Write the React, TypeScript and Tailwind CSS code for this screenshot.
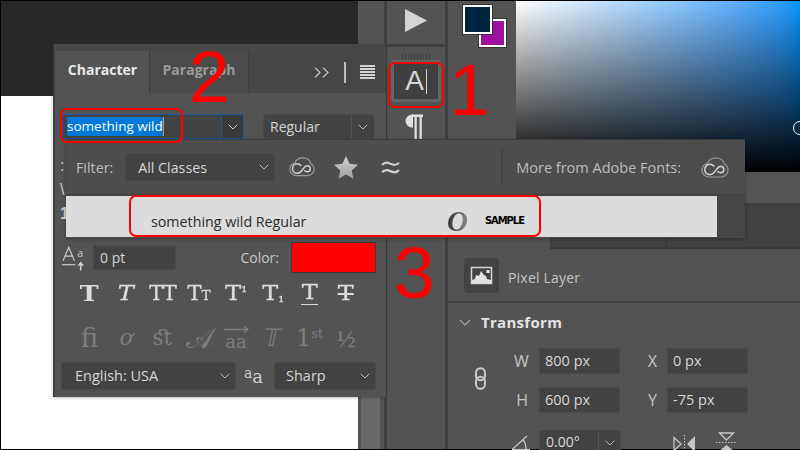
import React from "react";

const Chevron = ({ color = "#b8b8b8", size = 10 }: { color?: string; size?: number }) => (
  <svg width={size} height={size * 0.6} viewBox="0 0 10 6" fill="none" stroke={color} strokeWidth="1">
    <path d="M.7.7 5 5 9.3.7" />
  </svg>
);

const CloudLoop = ({ width = 28 }: { width?: number }) => (
  <svg width={width} height={width * 0.75} viewBox="0 0 28 21" fill="none">
    <path d="M8 20C3.800 20 1 16.800 1 13.200 1 10 3 7.400 6.200 6.600 7.600 3 11 1 15 1c4.400 0 7.600 2.600 8.600 6.200C25.800 8.400 27 10.600 27 13.200 27 16.800 24 20 20 20Z" stroke="#9c9c9c" strokeWidth="1.200" />
    <path d="M13.400 9.400C12 8 10.400 7.200 8.800 7.200c-3 0-5 2.600-5 5.400 0 2.800 2.200 5 5 5 2.600 0 4.400-2 6-4.200 1.600-2.400 3-4 5-4 1.600 0 3 1.200 3 3.200 0 1.800-1.400 3.200-3 3.200-1.200 0-2.400-.6-3.400-1.600" stroke="#cfcfcf" strokeWidth="1.600" />
  </svg>
);

const Star = () => (
  <svg width="26" height="25" viewBox="0 0 26 25">
    <defs>
      <linearGradient id="starFill" x1="0" y1="0" x2="0" y2="1">
        <stop offset="0" stopColor="#d0d0d0" />
        <stop offset="1" stopColor="#a0a0a0" />
      </linearGradient>
    </defs>
    <path d="M13 1l3.600 7.800 8.400.9-6.300 5.700 1.800 8.400L13 19.400 5.500 23.800l1.800-8.400L1 9.700l8.400-.9z" fill="url(#starFill)" />
  </svg>
);

const Waves = () => (
  <svg width="19" height="15" viewBox="0 0 19 15" fill="none" stroke="#d0d0d0" strokeWidth="2.200">
    <path d="M1 5c2.500-3 5-3 8-1.400S15.500 5.500 18 2.600" />
    <path d="M1 12.400c2.500-3 5-3 8-1.400s6.500 1.900 9-1" />
  </svg>
);

const DropSelect = ({ label, className, pad }: { label: string; className: string; pad: string }) => (
  <div className={`flex items-center justify-between rounded-[3px] border border-[#4a4a4a] bg-[#424242] text-[#d6d6d6] ${className}`}>
    <span className={pad}>{label}</span>
    <span className="pr-[5px]"><Chevron /></span>
  </div>
);

const Field = ({ value }: { value: string }) => (
  <div className="flex h-[26px] w-[81px] items-center border border-[#4a4a4a] bg-[#424242] pl-[5px] text-[14.500px] text-[#d8d8d8]">
    {value}
  </div>
);

// Character panel: type-style buttons, live and greyed rows
const serif = "font-['DejaVu_Serif'] leading-none";
const wide = "inline-block scale-x-[1.2] [-webkit-text-stroke:0.3px_#dcdcdc]";
const styleRow = [
  <span className={`${serif} text-[22px] font-bold scale-x-[1.15] inline-block`}>T</span>,
  <span className={`${serif} ${wide} text-[20px] italic`}>T</span>,
  <span className={`${serif} inline-block scale-x-[1.05] [-webkit-text-stroke:0.3px_#dcdcdc] text-[20px] tracking-[-1px]`}>TT</span>,
  <span className={`${serif} inline-block scale-x-[1.05] [-webkit-text-stroke:0.3px_#dcdcdc] text-[20px]`}>T<span className="text-[13px]">T</span></span>,
  <span className={`${serif} ${wide} text-[20px]`}>T<span className="relative -top-[8px] text-[8px]">1</span></span>,
  <span className={`${serif} ${wide} text-[20px]`}>T<span className="relative top-[2px] text-[8px]">1</span></span>,
  <span className={`${serif} border-b border-[#d8d8d8] px-[2px] pb-[2px]`}><span className={`${wide} text-[20px]`}>T</span></span>,
  <span className={`${serif} ${wide} text-[20px] line-through`}>T</span>,
];
const featureRow = [
  <span className={`${serif} text-[26px]`}>fi</span>,
  <span className={`${serif} text-[22px] italic`}>ơ</span>,
  <span className={`${serif} text-[22px]`}>ﬆ</span>,
  <span className="font-['DejaVu_Sans'] text-[29px] leading-none">𝒜</span>,
  <span className="flex flex-col items-center leading-none">
    <svg width="25" height="7" viewBox="0 0 25 7" fill="none" stroke="#7e7e7e" strokeWidth="1.300"><path d="M0 3.500h24M20 .5l4 3-4 3" /></svg>
    <span className={`${serif} text-[18px]`}>aa</span>
  </span>,
  <span className="inline-block -skew-x-12 font-['DejaVu_Sans'] text-[24px] leading-none">𝕋</span>,
  <span className={`${serif} text-[24px]`}>1<span className="relative -top-[8px] text-[13px]">st</span></span>,
  <span className="font-['Liberation_Serif'] text-[25px] leading-none">½</span>,
];

function CharacterPanel() {
  return (
    <div className="absolute left-[53px] top-[44px] flex h-[353px] w-[333px] flex-col border-l-2 border-[#3e3e3e] bg-[#535353] pl-px shadow-[0_1px_3px_rgba(0,0,0,0.25)]">
      <div className="h-[7px] shrink-0 bg-[#474747]" />
      <div className="flex h-[42px] shrink-0 bg-[#464646] text-[14px] font-bold">
        <div className="flex w-[93px] items-center justify-center bg-[#535353] pb-[5px] text-[#e8e8e8]">Character</div>
        <div className="flex w-[100px] items-center justify-center border-x border-[#3c3c3c] bg-[#4b4b4b] pb-[5px] text-[#999999]">Paragraph</div>
        <div className="flex flex-1 items-center justify-end gap-[14px] pr-[11px]">
          <svg width="16" height="11" viewBox="0 0 16 11" fill="none" stroke="#d0d0d0" strokeWidth="1.100"><path d="M1 .7 6 5.500 1 10.300M9 .7l5 4.800-5 4.800" /></svg>
          <div className="h-[21px] w-[2px] bg-[#bdbdbd]" />
          <div className="flex w-[15px] flex-col gap-[1.500px]">
            {[0, 1, 2, 3, 4].map((i) => (<div key={i} className="h-[1.500px] bg-[#d4d4d4]" />))}
          </div>
        </div>
      </div>
      <div className="flex h-[46px] shrink-0 items-end gap-[19px] pl-[6px]">
        <div className="flex h-[25px] w-[182px] border border-[#1c5a9c] bg-[#424242]">
          <div className="flex-1 pl-[4px] pt-[2px]">
            <span className="block h-[19px] w-[97px] whitespace-nowrap border-r border-[#e08a3c] bg-[#0078d7] text-[13.500px] leading-[19px] text-white">something wild</span>
          </div>
          <div className="flex w-[22px] items-center justify-center border-l border-[#1c5a9c] bg-[#3a3a3a]"><Chevron color="#cfcfcf" /></div>
        </div>
        <div className="flex h-[25px] w-[112px] rounded-[4px] border border-[#4b4b4b] bg-[#424242] text-[14px] text-[#d6d6d6]">
          <div className="flex-1 pl-[6px] leading-[23px]">Regular</div>
          <div className="flex w-[23px] items-center justify-center border-l border-[#545454]"><Chevron /></div>
        </div>
      </div>
      {/* Rows covered by the open font list; only their left edge shows */}
      <div className="flex h-[101px] shrink-0 flex-col gap-[4px] pl-[4px] pt-[17px] font-['Liberation_Sans'] text-[16px] leading-[20px] text-[#d0d0d0]">
        <span>:</span>
        <span>\</span>
        <span className="font-bold">1</span>
      </div>
      <div className="flex h-[34px] shrink-0 items-center pl-[6px] pr-[10px] pt-px text-[14px] text-[#d6d6d6]">
        <svg width="24" height="26" viewBox="0 0 25 26" fill="none" stroke="#cfcfcf">
          <path d="M1 16 7 2l6 14M3.500 11h7" strokeWidth="1.200" />
          <path d="M0 20h14" strokeWidth="1.200" />
          <path d="M19.500 26v-7M17 21l2.500-3 2.500 3" strokeWidth="1.600" />
          <text x="16" y="12" fontSize="11" fill="#cfcfcf" stroke="none" fontFamily="Open Sans">a</text>
        </svg>
        <div className="ml-[7px] flex h-[25px] w-[83px] items-center border border-[#4a4a4a] bg-[#424242] pl-[6px]">0 pt</div>
        <div className="ml-auto flex items-center gap-[12px]">
          <span className="text-[#c8c8c8]">Color:</span>
          <div className="h-[31px] w-[85px] border border-[#3c3c3c] bg-[#ff0000]" />
        </div>
      </div>
      <div className="flex h-[38px] shrink-0 items-center pl-[15px] text-[#dcdcdc]">
        {styleRow.map((g, i) => (
          <div key={i} className="flex w-[36.700px] justify-center">{g}</div>
        ))}
      </div>
      <div className="flex h-[46px] shrink-0 items-center pl-[15px] pt-[6px] text-[#7e7e7e]">
        {featureRow.map((g, i) => (
          <div key={i} className="flex w-[36.700px] justify-center">{g}</div>
        ))}
      </div>
      <div className="flex items-center pl-[5px] pt-[4px] text-[14.500px]">
        <DropSelect label="English: USA" className="h-[28px] w-[175px]" pad="pl-[13px]" />
        <span className="ml-[8px] flex w-[22px] items-baseline font-['DejaVu_Serif'] text-[#cfcfcf]">
          <span className="relative -top-[5px] text-[14px]">a</span><span className="text-[18px]">a</span>
        </span>
        <DropSelect label="Sharp" className="ml-[8px] h-[28px] w-[102px]" pad="pl-[11px]" />
      </div>
    </div>
  );
}

function FontPopup() {
  return (
    <div className="absolute left-[66px] top-[139px] flex h-[99px] w-[679px] flex-col border-t border-[#3b3b3b] bg-[#4d4d4d] text-[14.250px] shadow-[0_1px_4px_rgba(0,0,0,0.3)]">
      <div className="flex h-[56px] shrink-0 items-center border-b-2 border-[#434343] pl-[10px]">
        <span className="pt-px text-[#bdbdbd]">Filter:</span>
        <div className="ml-[12px] flex h-[28px] w-[150px] items-center justify-between rounded-[3px] border border-[#474747] bg-[#424242] pl-[12px] pr-[5px] text-[#d6d6d6]">
          <span className="pt-px">All Classes</span><Chevron />
        </div>
        <span className="ml-[14px]"><CloudLoop width={26} /></span>
        <span className="ml-[18px]"><Star /></span>
        <span className="ml-[22px]"><Waves /></span>
        <div className="ml-[101px] h-[36px] w-[2px] bg-[#434343]" />
        <span className="ml-[13px] pt-px text-[#bdbdbd] text-[14.500px]">More from Adobe Fonts:</span>
        <span className="ml-[20px]"><CloudLoop /></span>
      </div>
      <div className="mb-px flex flex-1 bg-[#464646]">
        <div className="flex w-[651px] items-center bg-[#dcdcdc] pl-[85px] pt-[10px] text-[#2a2a2a]">
          <span className="w-[296px] whitespace-nowrap">something wild Regular</span>
          <span className="bg-linear-to-r from-[#333333] to-[#999999] bg-clip-text pr-[3px] font-['Liberation_Serif'] text-[29px] font-bold italic leading-none text-transparent">O</span>
          <span className="ml-[14px] font-['DejaVu_Sans_Condensed','DejaVu_Sans'] text-[11px] font-bold tracking-[-1px] text-black">SAMPLE</span>
        </div>
      </div>
    </div>
  );
}

function ToolDock() {
  return (
    <div className="flex w-[58px] shrink-0 flex-col items-center bg-[#535353]">
      <div className="flex h-[46px] w-full items-center justify-center border-b-[3px] border-[#3f3f3f] pb-[4px]">
        <svg width="22" height="23" viewBox="0 0 22 23"><path d="M0 0 22 11.500 0 23Z" fill="#d4d4d4" /></svg>
      </div>
      <div className="mt-[7px] flex gap-[2px]">
        {Array.from({ length: 10 }).map((_, i) => (<div key={i} className="h-[5px] w-px bg-[#3e3e3e]" />))}
      </div>
      <div className="mt-[1px] flex h-[42px] w-[50px] items-center justify-center rounded-[4px] border-[3px] border-[#636363] bg-[#3f3f3f] text-[28px] text-[#d8d8d8]">
        <span className="font-['Liberation_Sans'] leading-none">A</span>
        <span className="ml-[2px] h-[25px] w-px bg-[#d8d8d8]" />
      </div>
      <svg className="-ml-[6px] mt-[12px]" width="19" height="26" viewBox="0 0 19 26">
        <path d="M1.500 7A6.500 6.500 0 0 1 8 .5h1V13.500H8A6.500 6.500 0 0 1 1.500 7Z" fill="#e0e0e0" />
        <path d="M8 .5H19v2.500H8z" fill="#e0e0e0" />
        <path d="M10.500 2h2.300v24h-2.300zM15.500 2h2.300v24h-2.300z" fill="#e0e0e0" />
      </svg>
    </div>
  );
}

function PropertiesColumn() {
  return (
    <div className="flex min-w-0 flex-1 flex-col bg-[#535353] text-[14px] text-[#c4c4c4]">
      <div className="flex h-[171px] shrink-0">
        {/* Foreground and background chips */}
        <div className="relative w-[68px] shrink-0">
          <div className="absolute left-[31px] top-[18px] h-[28px] w-[27px] border-2 border-white bg-[#a010a0] outline outline-1 outline-[#333333]" />
          <div className="absolute left-[15px] top-[4px] h-[29px] w-[29px] border-2 border-white bg-[#00253f] outline outline-1 outline-[#333333]" />
        </div>
        <div className="relative flex-1 bg-linear-to-r from-white to-[#0096ff]">
          <div className="absolute inset-0 bg-linear-to-b from-transparent to-black" />
          <div className="absolute left-[277px] top-[120px] h-[14px] w-[14px] rounded-full border border-white" />
        </div>
      </div>
      <div className="flex h-[31px] shrink-0 justify-end bg-[#4d4d4d]">
        <div className="w-[55px] bg-[#555555]" />
      </div>
      <div className="h-[4px] shrink-0 bg-[#3f3f3f]" />
      <div className="flex h-[42px] shrink-0 bg-[#424242]">
        <div className="w-[102px] bg-[#535353]" />
        <div className="w-[117px] border-x border-[#3a3a3a] border-b-2" />
        <div className="flex-1 border-b-2 border-[#3a3a3a]" />
      </div>
      <div className="flex h-[52px] shrink-0 items-center gap-[9px] pl-[16px]">
        <div className="flex h-[35px] w-[35px] items-center justify-center rounded-[4px] bg-[#434343]">
          <svg width="23" height="19" viewBox="0 0 23 19">
            <path d="M1.500 1.500h20v16h-20z" fill="none" stroke="#d8d8d8" strokeWidth="1.500" />
            <path d="M2 17v-3l3-1 1-4 3 1 2-5 3 4 2 1 1 3 4 1v3z" fill="#e2e2e2" />
            <rect x="16.500" y="4" width="3" height="3" fill="#e8e8e8" />
          </svg>
        </div>
        <span className="pt-[4px] tracking-[0.2px]">Pixel Layer</span>
      </div>
      <div className="h-[2px] shrink-0 bg-[#434343]" />
      <div className="flex h-[36px] shrink-0 items-center gap-[10px] pl-[11px] pt-[3px]">
        <Chevron size={12} color="#a8a8a8" />
        <span className="text-[15px] font-bold tracking-[0.3px] text-[#e4e4e4]">Transform</span>
      </div>
      <div className="flex pl-[24px] pt-[9px]">
        <div className="flex w-[17px] flex-col items-center pt-[19px]">
          <svg width="13" height="23" viewBox="0 0 13 23" fill="none" stroke="#cccccc" strokeWidth="2">
            <rect x="2" y="1.200" width="9" height="12" rx="4.500" />
            <rect x="2" y="9.800" width="9" height="12" rx="4.500" />
          </svg>
        </div>
        <div className="ml-[25px] grid grid-cols-[25px_81px_47px_81px] grid-rows-[26px_26px] items-center gap-y-[13px]">
          <span className="text-left text-[16px]">W</span><Field value="800 px" />
          <span className="pr-[10px] text-right text-[16px]">X</span><Field value="0 px" />
          <span className="pr-[11px] text-right text-[16px]">H</span><Field value="600 px" />
          <span className="pr-[10px] text-right text-[16px]">Y</span><Field value="-75 px" />
        </div>
      </div>
      <div className="flex items-start pl-[64px] pt-[17px]">
        <svg className="mt-[5px]" width="18" height="16" viewBox="0 0 18 16" fill="none" stroke="#cccccc" strokeWidth="1.200">
          <path d="M0 14.500 15 1M0 14.500h18M11 5c2 2 3 5 3 9" />
        </svg>
        <div className="ml-[9px] flex h-[26px] w-[82px] rounded-[3px] border border-[#4a4a4a] bg-[#424242] text-[#d8d8d8]">
          <div className="flex-1 pl-[6px]">0.00°</div>
          <div className="flex w-[22px] items-center justify-center border-l border-[#535353]"><Chevron /></div>
        </div>
        <svg className="ml-[52px] mt-[5px]" width="23" height="18" viewBox="0 0 23 18">
          <path d="M1 2.500 8 9l-7 6.500z" fill="none" stroke="#c8c8c8" strokeWidth="1.300" />
          <path d="M22 1v16l-8-8z" fill="#c8c8c8" />
          <path d="M11.500 0v18" stroke="#c8c8c8" strokeDasharray="1.500 1.500" />
        </svg>
        <svg className="ml-[20px] mt-[2px]" width="21" height="18" viewBox="0 0 21 18">
          <path d="M3.500 1h14l-7 7z" fill="none" stroke="#c8c8c8" strokeWidth="1.300" />
          <path d="M0 10.500h21" stroke="#c8c8c8" strokeDasharray="1.500 1.500" />
          <path d="M10.500 13l6 5h-12z" fill="#c8c8c8" />
        </svg>
      </div>
    </div>
  );
}

const Callout = ({ className }: { className: string }) => (
  <div className={`absolute rounded-[7px] border-2 border-[#ff0000] ${className}`} />
);

const Step = ({ n, className }: { n: string; className: string }) => (
  <span className={`absolute font-['Liberation_Sans'] text-[73px] leading-none text-[#ff0000] ${className}`}>{n}</span>
);

export default function App() {
  return (
    <div className="relative h-[450px] w-[800px] overflow-hidden bg-black py-px pl-px font-['Open_Sans',sans-serif]">
      <div className="flex h-full">
        <div className="flex w-[357px] shrink-0 flex-col">
          <div className="h-[95px] bg-[#282828]" />
          <div className="flex-1 bg-white" />
        </div>
        <div className="flex w-[26px] shrink-0 flex-col bg-[#535353] pl-[3px] pr-[4px]">
          <div className="mt-[46px] h-[3px] -mx-[3px] bg-[#3f3f3f]" />
          <div className="flex-1 bg-[#696969]" />
        </div>
        <div className="w-[3px] shrink-0 bg-[#3f3f3f]" />
        <ToolDock />
        <div className="w-[3px] shrink-0 bg-[#3f3f3f]" />
        <PropertiesColumn />
      </div>

      <CharacterPanel />
      <FontPopup />

      <Callout className="left-[388px] top-[62px] h-[46px] w-[56px]" />
      <Callout className="left-[60px] top-[108px] h-[35px] w-[123px]" />
      <Callout className="left-[129px] top-[195px] h-[42px] w-[412px]" />
      <Step n="2" className="left-[189px] top-[40px]" />
      <Step n="1" className="left-[449px] top-[53px]" />
      <Step n="3" className="left-[394px] top-[236px]" />
    </div>
  );
}
